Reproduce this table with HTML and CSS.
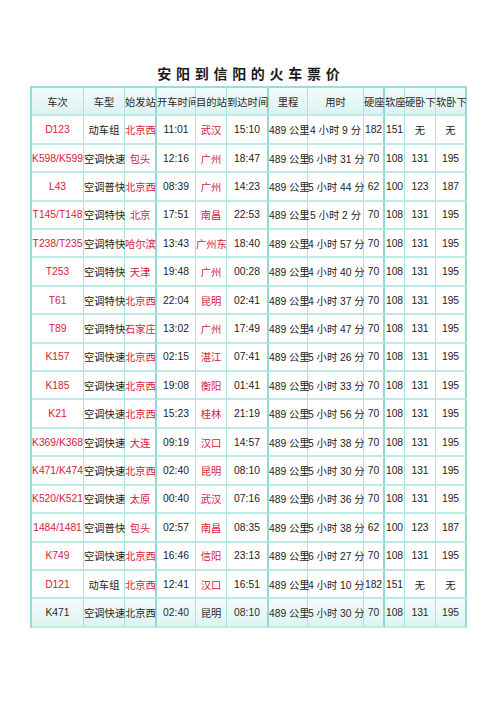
FILE: index.html
```html
<!DOCTYPE html>
<html lang="zh-CN">
<head>
<meta charset="utf-8">
<title>安阳到信阳的火车票价</title>
<link rel="stylesheet" href="styles.css">
</head>
<body>
<div class="page">
  <h1 class="title">安阳到信阳的火车票价</h1>
  <div class="grid">
    <div class="row head"><div>车次</div><div>车型</div><div class="tk">始发站</div><div>开车时间</div><div>目的站</div><div class="tk">到达时间</div><div>里程</div><div>用时</div><div class="tk">硬座</div><div>软座</div><div>硬卧下</div><div class="tk">软卧下</div></div>
    <div class="row"><div class="red">D123</div><div>动车组</div><div class="tk red">北京西</div><div>11:01</div><div class="red">武汉</div><div class="tk">15:10</div><div>489 公里</div><div>4 小时 9 分</div><div class="tk">182</div><div>151</div><div>无</div><div class="tk">无</div></div>
    <div class="row"><div class="red">K598/K599</div><div>空调快速</div><div class="tk red">包头</div><div>12:16</div><div class="red">广州</div><div class="tk">18:47</div><div>489 公里</div><div>6 小时 31 分</div><div class="tk">70</div><div>108</div><div>131</div><div class="tk">195</div></div>
    <div class="row"><div class="red">L43</div><div>空调普快</div><div class="tk red">北京西</div><div>08:39</div><div class="red">广州</div><div class="tk">14:23</div><div>489 公里</div><div>5 小时 44 分</div><div class="tk">62</div><div>100</div><div>123</div><div class="tk">187</div></div>
    <div class="row"><div class="red">T145/T148</div><div>空调特快</div><div class="tk red">北京</div><div>17:51</div><div class="red">南昌</div><div class="tk">22:53</div><div>489 公里</div><div>5 小时 2 分</div><div class="tk">70</div><div>108</div><div>131</div><div class="tk">195</div></div>
    <div class="row"><div class="red">T238/T235</div><div>空调特快</div><div class="tk red">哈尔滨</div><div>13:43</div><div class="red">广州东</div><div class="tk">18:40</div><div>489 公里</div><div>4 小时 57 分</div><div class="tk">70</div><div>108</div><div>131</div><div class="tk">195</div></div>
    <div class="row"><div class="red">T253</div><div>空调特快</div><div class="tk red">天津</div><div>19:48</div><div class="red">广州</div><div class="tk">00:28</div><div>489 公里</div><div>4 小时 40 分</div><div class="tk">70</div><div>108</div><div>131</div><div class="tk">195</div></div>
    <div class="row"><div class="red">T61</div><div>空调特快</div><div class="tk red">北京西</div><div>22:04</div><div class="red">昆明</div><div class="tk">02:41</div><div>489 公里</div><div>4 小时 37 分</div><div class="tk">70</div><div>108</div><div>131</div><div class="tk">195</div></div>
    <div class="row"><div class="red">T89</div><div>空调特快</div><div class="tk red">石家庄</div><div>13:02</div><div class="red">广州</div><div class="tk">17:49</div><div>489 公里</div><div>4 小时 47 分</div><div class="tk">70</div><div>108</div><div>131</div><div class="tk">195</div></div>
    <div class="row"><div class="red">K157</div><div>空调快速</div><div class="tk red">北京西</div><div>02:15</div><div class="red">湛江</div><div class="tk">07:41</div><div>489 公里</div><div>5 小时 26 分</div><div class="tk">70</div><div>108</div><div>131</div><div class="tk">195</div></div>
    <div class="row"><div class="red">K185</div><div>空调快速</div><div class="tk red">北京西</div><div>19:08</div><div class="red">衡阳</div><div class="tk">01:41</div><div>489 公里</div><div>6 小时 33 分</div><div class="tk">70</div><div>108</div><div>131</div><div class="tk">195</div></div>
    <div class="row"><div class="red">K21</div><div>空调快速</div><div class="tk red">北京西</div><div>15:23</div><div class="red">桂林</div><div class="tk">21:19</div><div>489 公里</div><div>5 小时 56 分</div><div class="tk">70</div><div>108</div><div>131</div><div class="tk">195</div></div>
    <div class="row"><div class="red">K369/K368</div><div>空调快速</div><div class="tk red">大连</div><div>09:19</div><div class="red">汉口</div><div class="tk">14:57</div><div>489 公里</div><div>5 小时 38 分</div><div class="tk">70</div><div>108</div><div>131</div><div class="tk">195</div></div>
    <div class="row"><div class="red">K471/K474</div><div>空调快速</div><div class="tk red">北京西</div><div>02:40</div><div class="red">昆明</div><div class="tk">08:10</div><div>489 公里</div><div>5 小时 30 分</div><div class="tk">70</div><div>108</div><div>131</div><div class="tk">195</div></div>
    <div class="row"><div class="red">K520/K521</div><div>空调快速</div><div class="tk red">太原</div><div>00:40</div><div class="red">武汉</div><div class="tk">07:16</div><div>489 公里</div><div>6 小时 36 分</div><div class="tk">70</div><div>108</div><div>131</div><div class="tk">195</div></div>
    <div class="row"><div class="red">1484/1481</div><div>空调普快</div><div class="tk red">包头</div><div>02:57</div><div class="red">南昌</div><div class="tk">08:35</div><div>489 公里</div><div>5 小时 38 分</div><div class="tk">62</div><div>100</div><div>123</div><div class="tk">187</div></div>
    <div class="row"><div class="red">K749</div><div>空调快速</div><div class="tk red">北京西</div><div>16:46</div><div class="red">信阳</div><div class="tk">23:13</div><div>489 公里</div><div>6 小时 27 分</div><div class="tk">70</div><div>108</div><div>131</div><div class="tk">195</div></div>
    <div class="row"><div class="red">D121</div><div>动车组</div><div class="tk red">北京西</div><div>12:41</div><div class="red">汉口</div><div class="tk">16:51</div><div>489 公里</div><div>4 小时 10 分</div><div class="tk">182</div><div>151</div><div>无</div><div class="tk">无</div></div>
    <div class="row foot"><div>K471</div><div>空调快速</div><div class="tk">北京西</div><div>02:40</div><div>昆明</div><div class="tk">08:10</div><div>489 公里</div><div>5 小时 30 分</div><div class="tk">70</div><div>108</div><div>131</div><div class="tk">195</div></div>
  </div>
</div>
</body>
</html>
```
FILE: styles.css
```css
* { box-sizing: border-box; }
html, body { margin: 0; padding: 0; background: #ffffff; }
body {
  font-family: "Liberation Sans", "Noto Sans CJK SC", sans-serif;
  color: #222222;
}
.page {
  padding: 61px 0 0 30px;
}
.title {
  margin: 0;
  width: 437px;
  height: 25px;
  line-height: 25px;
  text-align: center;
  font-family: "Noto Sans CJK SC", sans-serif;
  font-size: 14px;
  font-weight: bold;
  letter-spacing: 4.7px;
  padding-left: 4.7px;
  color: #1a1a1a;
}
.grid {
  width: 437px;
  border-left: 2px solid #9adcd6;
  border-top: 2px solid #9adcd6;
}
.row {
  display: grid;
  grid-template-columns: 52px 41px 32px 39px 31px 42px 39px 56px 21px 20px 31px 31px;
  height: 28.42px;
}
.row > div {
  display: flex;
  align-items: center;
  justify-content: safe center;
  white-space: nowrap;
  font-size: 10.3px;
  border-right: 1px solid #ade3df;
  border-bottom: 2px solid #bdeae6;
  min-width: 0;
}
.row > div.tk {
  border-right: 2px solid #92d9d3;
}
.red { color: #d3223c; }
.head > div {
  background: linear-gradient(#f2fbfa, #dcf3f1);
  color: #2a2a2a;
}
.foot > div {
  background: linear-gradient(#f4fcfb, #ddf4f2);
  color: #2a2a2a;
}
```
